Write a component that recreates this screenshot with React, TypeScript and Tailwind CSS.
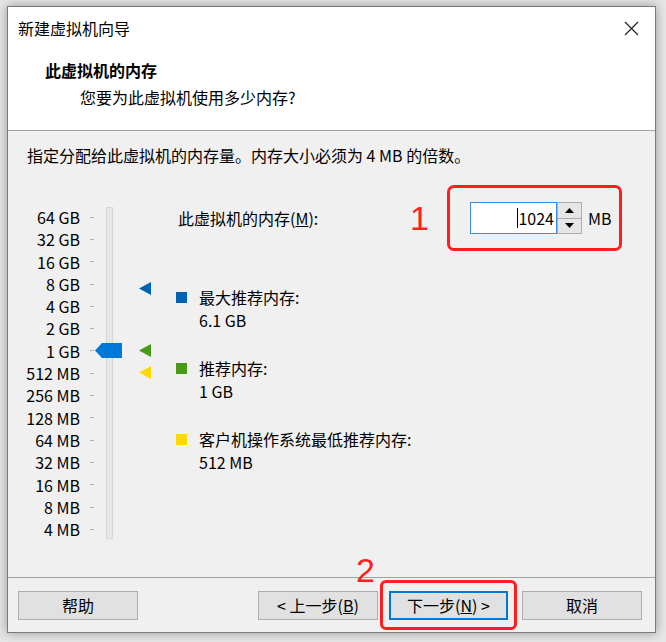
import React from "react";

const labels = ["64 GB","32 GB","16 GB","8 GB","4 GB","2 GB","1 GB","512 MB","256 MB","128 MB","64 MB","32 MB","16 MB","8 MB","4 MB"];

function Tri({ color, top }: { color: string; top: number }) {
  return (
    <svg className="absolute left-0" style={{ top }} width="13" height="13" viewBox="0 0 13 13">
      <polygon points="0,6.5 12,0 12,13" fill={color} />
    </svg>
  );
}

export default function App() {
  return (
    <div className="relative w-[666px] h-[642px] overflow-hidden bg-[#e6e6e6] pl-[7px] pt-[6px] font-['Noto_Sans_CJK_SC','Microsoft_YaHei',sans-serif] text-[16px] text-black">
      <div className="w-[649px] h-[627px] border border-[#7a7a7a] bg-[#f0f0f0] shadow-[0_0_10px_rgba(0,0,0,0.35)] flex flex-col">
        {/* header */}
        <div className="h-[124px] bg-white border-b border-[#a0a0a0] flex flex-col">
          <div className="h-[42px] flex items-center justify-between pl-[10px] pr-[16px]">
            <span className="text-[16px] leading-[22px]">新建虚拟机向导</span>
            <svg width="15" height="15" viewBox="0 0 15 15">
              <path d="M1 1 L14 14 M14 1 L1 14" stroke="#222" strokeWidth="1.2" />
            </svg>
          </div>
          <div className="mt-[9px] pl-[37px] font-bold text-[16px] leading-[24px]">此虚拟机的内存</div>
          <div className="mt-[3px] pl-[72px] text-[16px] leading-[24px]">您要为此虚拟机使用多少内存?</div>
        </div>
        {/* body */}
        <div className="flex-1 flex flex-col">
          <div className="pt-[12px] pl-[19px] leading-[24px]">指定分配给此虚拟机的内存量。内存大小必须为 4 MB 的倍数。</div>
          <div className="mt-[18px] flex">
            {/* labels */}
            <div className="pt-[21px] w-[72px] flex flex-col items-end">
              {labels.map((l) => (
                <div key={l} className="h-[22.3px] leading-[22.3px] whitespace-nowrap">{l}</div>
              ))}
            </div>
            {/* ticks */}
            <div className="pt-[21px] ml-[10px] w-[4px] flex flex-col">
              {labels.map((l) => (
                <div key={l} className="h-[22.3px] flex items-center">
                  <div className="w-[4px] h-[1px] bg-[#b0b0b0]" />
                </div>
              ))}
            </div>
            {/* track */}
            <div className="pt-[22px] ml-[12px] relative">
              <div className="w-[7px] h-[332px] bg-[#e7e7e7] border border-[#d6d6d6]" />
              <svg className="absolute left-[-11px] top-[158px]" width="27" height="15" viewBox="0 0 27 15">
                <polygon points="0,7.5 7,0 27,0 27,15 7,15" fill="#0078d7" />
              </svg>
            </div>
            {/* markers */}
            <div className="relative ml-[26px] w-[13px]">
              <Tri color="#0063b1" top={97} />
              <Tri color="#4a9a17" top={159} />
              <Tri color="#ffd800" top={181} />
            </div>
            {/* right */}
            <div className="ml-[24px] flex-1 flex flex-col">
              <div className="h-[66px] flex items-center">
                <span className="ml-[2px] leading-[22px] whitespace-nowrap">
                  此虚拟机的内存(<span className="underline">M</span>):
                </span>
                <div className="flex-1" />
                <span className="text-[34px] leading-[40px] text-[#ff1e1e] font-['Liberation_Sans',sans-serif] mr-[18px]">1</span>
                <div className="w-[175px] h-[66px] border-[3px] border-[#ff1e1e] rounded-[7px] flex items-center pl-[20px] mr-[33px]">
                  <div className="w-[87px] h-[32px] bg-white border border-[#3d8ee0] flex items-center justify-end pr-[2px]">
                    <span className="w-[1px] h-[20px] bg-black" />
                    <span className="leading-[22px]">1024</span>
                  </div>
                  <div className="w-[25px] h-[32px] border border-[#adadad] bg-[#e6e6e6] flex flex-col">
                    <div className="flex-1 flex items-center justify-center border-b border-[#adadad]">
                      <svg width="9" height="5" viewBox="0 0 9 5"><polygon points="0,5 4.5,0 9,5" fill="#000" /></svg>
                    </div>
                    <div className="flex-1 flex items-center justify-center">
                      <svg width="9" height="5" viewBox="0 0 9 5"><polygon points="0,0 4.5,5 9,0" fill="#000" /></svg>
                    </div>
                  </div>
                  <span className="ml-[6px] leading-[22px]">MB</span>
                </div>
              </div>
              <div className="mt-[35px] flex flex-col gap-[25px]">
                <div className="flex">
                  <div className="w-[11px] h-[11px] bg-[#0063b1] mt-[6px]" />
                  <div className="ml-[12px] leading-[23px]">
                    <div>最大推荐内存:</div>
                    <div>6.1 GB</div>
                  </div>
                </div>
                <div className="flex">
                  <div className="w-[11px] h-[11px] bg-[#4a9a17] mt-[6px]" />
                  <div className="ml-[12px] leading-[23px]">
                    <div>推荐内存:</div>
                    <div>1 GB</div>
                  </div>
                </div>
                <div className="flex">
                  <div className="w-[11px] h-[11px] bg-[#ffd800] mt-[6px]" />
                  <div className="ml-[12px] leading-[23px]">
                    <div>客户机操作系统最低推荐内存:</div>
                    <div>512 MB</div>
                  </div>
                </div>
              </div>
            </div>
          </div>
        </div>
        {/* footer */}
        <div className="h-[55px] border-t border-[#a0a0a0] flex items-center">
          <div className="ml-[10px] w-[120px] h-[29px] bg-[#e1e1e1] border border-[#adadad] flex items-center justify-center">帮助</div>
          <div className="flex-1" />
          <div className="w-[120px] h-[29px] bg-[#e1e1e1] border border-[#adadad] flex items-center justify-center whitespace-nowrap">
            &lt; 上一步(<span className="underline">B</span>)
          </div>
          <div className="ml-[2px] w-[137px] h-[50px] border-[3px] border-[#ff1e1e] rounded-[6px] flex items-center pl-[6px]">
            <div className="w-[119px] h-[29px] bg-[#e1e1e1] border-2 border-[#0078d7] flex items-center justify-center whitespace-nowrap">
              下一步(<span className="underline">N</span>) &gt;
            </div>
          </div>
          <div className="ml-[5px] mr-[13px] w-[120px] h-[29px] bg-[#e1e1e1] border border-[#adadad] flex items-center justify-center">取消</div>
        </div>
      </div>
      <span className="absolute left-[356px] top-[550px] text-[34px] leading-[40px] text-[#ff1e1e] font-['Liberation_Sans',sans-serif]">2</span>
    </div>
  );
}
